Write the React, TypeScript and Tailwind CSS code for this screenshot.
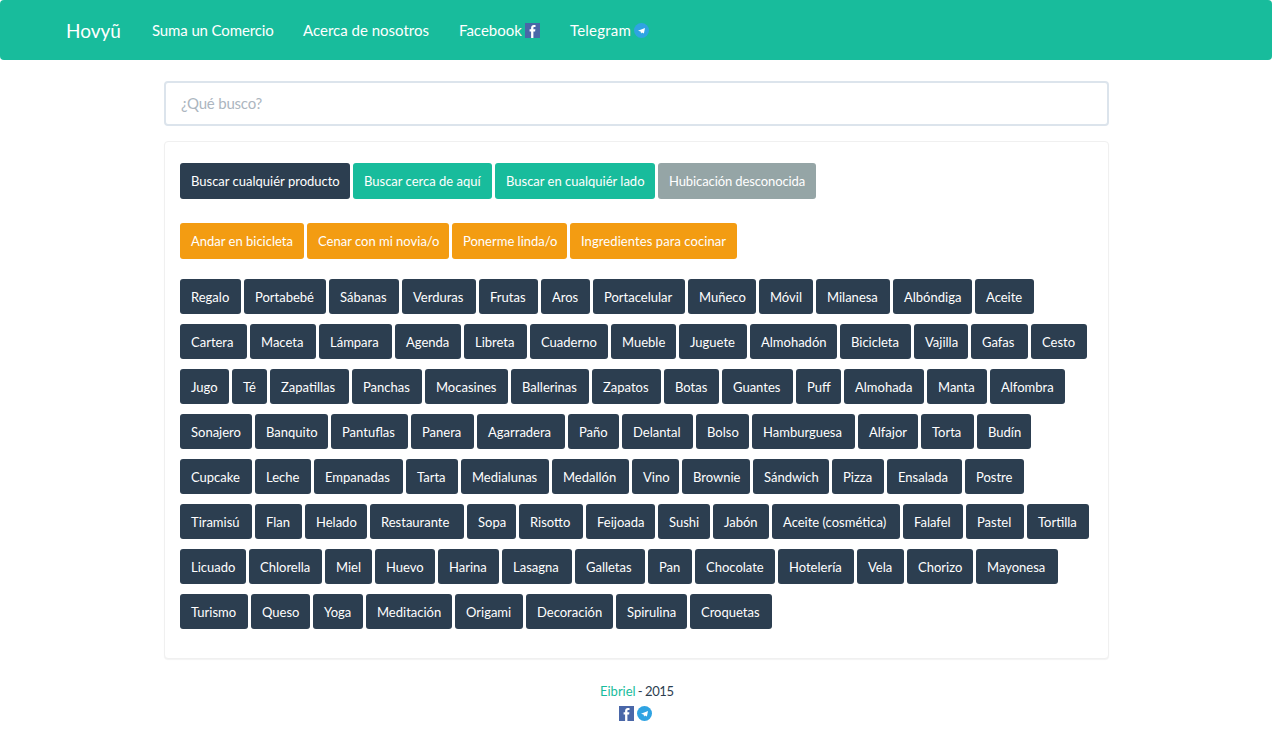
import React from 'react';

type Item = [string, number];

const modes: { label: string; width: string; color: string }[] = [
  { label: 'Buscar cualquiér producto', width: 'w-[170px]', color: 'bg-[#2c3e50]' },
  { label: 'Buscar cerca de aquí', width: 'w-[139px]', color: 'bg-[#18bc9c]' },
  { label: 'Buscar en cualquiér lado', width: 'w-[160px]', color: 'bg-[#18bc9c]' },
  { label: 'Hubicación desconocida', width: 'w-[158px] tracking-[-0.1px]', color: 'bg-[#95a5a6]' },
];

const moods: { label: string; width: string }[] = [
  { label: 'Andar en bicicleta', width: 'w-[124px]' },
  { label: 'Cenar con mi novia/o', width: 'w-[142px]' },
  { label: 'Ponerme linda/o', width: 'w-[115px]' },
  { label: 'Ingredientes para cocinar', width: 'w-[167px] tracking-[0.08px]' },
];

// the web font in the original has other advances than the local Lato, so rows carry their widths
const tagRows: Item[][] = [
  [['Regalo', 61], ['Portabebé', 82], ['Sábanas', 70], ['Verduras', 74], ['Frutas', 59], ['Aros', 49], ['Portacelular', 92], ['Muñeco', 68], ['Móvil', 54], ['Milanesa', 74], ['Albóndiga', 79], ['Aceite', 59]],
  [['Cartera', 67], ['Maceta', 66], ['Lámpara', 73], ['Agenda', 66], ['Libreta', 63], ['Cuaderno', 78], ['Mueble', 65], ['Juguete', 68], ['Almohadón', 87], ['Bicicleta', 71], ['Vajilla', 54], ['Gafas', 57], ['Cesto', 56]],
  [['Jugo', 49], ['Té', 35], ['Zapatillas', 79], ['Panchas', 70], ['Mocasines', 83], ['Ballerinas', 78], ['Zapatos', 69], ['Botas', 55], ['Guantes', 71], ['Puff', 45], ['Almohada', 80], ['Manta', 60], ['Alfombra', 75]],
  [['Sonajero', 72], ['Banquito', 73], ['Pantuflas', 77], ['Panera', 63], ['Agarradera', 88], ['Paño', 51], ['Delantal', 71], ['Bolso', 53], ['Hamburguesa', 103], ['Alfajor', 60], ['Torta', 53], ['Budín', 54]],
  [['Cupcake', 72], ['Leche', 56], ['Empanadas', 89], ['Tarta', 52], ['Medialunas', 88], ['Medallón', 77], ['Vino', 47], ['Brownie', 68], ['Sándwich', 76], ['Pizza', 52], ['Ensalada', 75], ['Postre', 59]],
  [['Tiramisú', 72], ['Flan', 47], ['Helado', 62], ['Restaurante', 94], ['Sopa', 49], ['Risotto', 64], ['Feijoada', 69], ['Sushi', 52], ['Jabón', 56], ['Aceite (cosmética)', 128], ['Falafel', 60], ['Pastel', 58], ['Tortilla', 62]],
  [['Licuado', 66], ['Chlorella', 73], ['Miel', 47], ['Huevo', 60], ['Harina', 61], ['Lasagna', 70], ['Galletas', 70], ['Pan', 44], ['Chocolate', 80], ['Hotelería', 76], ['Vela', 47], ['Chorizo', 66], ['Mayonesa', 82]],
  [['Turismo', 68], ['Queso', 59], ['Yoga', 50], ['Meditación', 86], ['Origami', 68], ['Decoración', 87], ['Spirulina', 71], ['Croquetas', 82]],
];

const FacebookIcon = () => (
  <svg width="15" height="15" viewBox="0 0 15 15" className="block shrink-0">
    <rect width="15" height="15" fill="#4a67a8" />
    <path d="M8.4 15V8.4h1.7l.3-2.2h-2V5c0-.7.2-1 1-1h1.1V2c-.3 0-1-.1-1.6-.1-1.7 0-2.8 1-2.8 2.9v1.4H4.6v2.2h1.5V15z" fill="#fff" />
  </svg>
);

const TelegramIcon = () => (
  <svg width="15" height="15" viewBox="0 0 15 15" className="block shrink-0">
    <circle cx="7.5" cy="7.5" r="7.5" fill="#2fa3e2" />
    <path d="M4 7.7 11 5 9.9 10.6 8 9.4 7.1 10.6 6.6 8.6z" fill="#fff" />
  </svg>
);

const App = () => {
  return (
    <div className="min-h-[733px] bg-white font-['Lato','Liberation_Sans',sans-serif] text-[15px] text-[#2c3e50]">
      <nav className="h-[60px] rounded-[4px] bg-[#18bc9c] pl-[66px] flex items-center text-white whitespace-nowrap">
        <a className="w-[56px] text-[19px] leading-[19px] mr-[30px]">Hovyũ</a>
        <div className="flex items-center gap-[30px]">
          <a className="w-[121px] tracking-[-0.12px]">Suma un Comercio</a>
          <a className="w-[126px]">Acerca de nosotros</a>
          <a className="flex items-center">
            <span className="w-[66px]">Facebook</span>
            <span className="mt-[1px]"><FacebookIcon /></span>
          </a>
          <a className="flex items-center">
            <span className="w-[64px] tracking-[0.2px]">Telegram</span>
            <span className="mt-[1px]"><TelegramIcon /></span>
          </a>
        </div>
      </nav>

      <main className="w-[945px] ml-[164px] pt-[21px]">
        <input
          type="text"
          placeholder="¿Qué busco?"
          className="block w-full h-[45px] rounded-[4px] border-2 border-[#dce4ec] bg-white pl-[15px] pr-[15px] pb-[2px] text-[15px] tracking-[-0.2px] outline-none placeholder:text-[#acb6c0]"
        />

        <section className="mt-[15px] h-[518px] rounded-[4px] border border-[#f0f0f0] shadow-[0_1px_1px_rgba(0,0,0,0.05)] bg-white px-[15px] pt-[21px]">
          <div className="flex gap-[3px]">
            {modes.map((m) => (
              <button key={m.label} className={`h-[36px] pt-[2px] pl-[11px] text-left rounded-[3px] text-[13px] text-white whitespace-nowrap ${m.width} ${m.color}`}>
                {m.label}
              </button>
            ))}
          </div>

          <div className="mt-[24px] flex gap-[3px]">
            {moods.map((m) => (
              <button key={m.label} className={`h-[36px] pt-[2px] pl-[11px] text-left rounded-[3px] text-[13px] text-white whitespace-nowrap bg-[#f39c12] ${m.width}`}>
                {m.label}
              </button>
            ))}
          </div>

          <div className="mt-[20px] flex flex-col gap-[10px]">
            {tagRows.map((row) => (
              <div key={row[0][0]} className="flex gap-[3px]">
                {row.map(([label, width]) => (
                  <button
                    key={label}
                    style={{ width }}
                    className="h-[35px] pt-[2px] pl-[11px] text-left rounded-[3px] text-[13px] text-white whitespace-nowrap bg-[#2c3e50]"
                  >
                    {label}
                  </button>
                ))}
              </div>
            ))}
          </div>
        </section>

        <footer className="mt-[23px] flex flex-col items-center text-[13px] leading-[18px]">
          <p className="flex w-[72px] mr-[1px] whitespace-nowrap">
            <span className="text-[#18bc9c]">Eibriel</span>
            <span className="ml-[2px] tracking-[-0.4px]">- 2015</span>
          </p>
          <div className="mt-[6px] mr-[2px] flex gap-[3px]">
            <FacebookIcon />
            <TelegramIcon />
          </div>
        </footer>
      </main>
    </div>
  );
};

export default App;
